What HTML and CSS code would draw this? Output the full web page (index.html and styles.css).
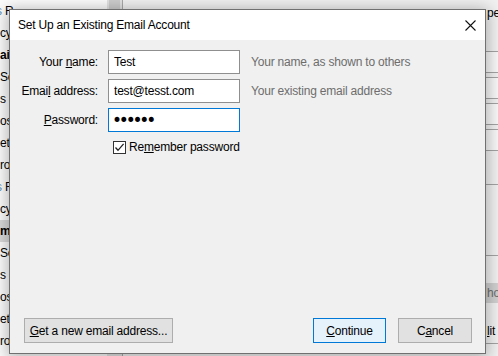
FILE: index.html
```html
<!DOCTYPE html>
<html lang="en">
<head>
  <meta charset="UTF-8">
  <meta name="viewport" content="width=device-width, initial-scale=1">
  <title>Set Up an Existing Email Account</title>
  <link rel="stylesheet" href="styles.css">
</head>
<body>

  <!-- account settings window behind the dialog -->
  <div class="app">
    <ul class="tree">
      <li class="cut"><span class="blue">s</span> R</li>
      <li>cy</li>
      <li class="bold">ail</li>
      <li>Se</li>
      <li>s &amp;</li>
      <li>os</li>
      <li>et</li>
      <li>ro</li>
      <li class="cut"><span class="blue">s</span> R</li>
      <li>cy</li>
      <li class="bold sel">m</li>
      <li>Se</li>
      <li>s &amp;</li>
      <li>os</li>
      <li>et</li>
      <li>ro</li>
    </ul>
    <div class="scrollbar"><div class="thumb"></div></div>
    <div class="pane">
      <div class="pane-main"></div>
      <div class="pane-edge">
        <div class="edge-label">pe</div>
        <div class="edge-box first"></div>
        <div class="edge-box"></div>
        <div class="edge-box"></div>
        <div class="edge-box"></div>
        <div class="edge-group"></div>
        <div class="edge-btn disabled">ho</div>
        <div class="edge-btn last"><u>l</u>it</div>
      </div>
    </div>
  </div>

  <!-- dialog -->
  <div class="dialog">
    <div class="titlebar">
      <span class="title">Set Up an Existing Email Account</span>
      <svg class="close" width="11" height="11" viewBox="0 0 11 11">
        <path d="M0.5 0.5 L10.5 10.5 M10.5 0.5 L0.5 10.5" stroke="#111" stroke-width="1.1" fill="none"/>
      </svg>
    </div>

    <form class="form">
      <label for="name">Your <u>n</u>ame:</label>
      <input class="field" id="name" type="text" value="Test">
      <span class="hint">Your name, as shown to others</span>

      <label for="email">Emai<u>l</u> address:</label>
      <input class="field" id="email" type="text" value="test@tesst.com">
      <span class="hint">Your existing email address</span>

      <label for="password"><u>P</u>assword:</label>
      <input class="field focus password" id="password" type="password" value="secret">
      <span></span>

      <label class="remember">
        <span class="check">
          <svg width="11" height="11" viewBox="0 0 11 11">
            <polyline points="1.5,5.5 4,8.3 9.6,1.8" stroke="#222" stroke-width="1.3" fill="none"/>
          </svg>
        </span>
        Re<u>m</u>ember password
      </label>
    </form>

    <div class="footer">
      <button class="btn new" type="button"><u>G</u>et a new email address...</button>
      <button class="btn continue" type="button"><u>C</u>ontinue</button>
      <button class="btn cancel" type="button">C<u>a</u>ncel</button>
    </div>
  </div>

</body>
</html>
```

FILE: styles.css
```css
/* page */
body {
  margin: 0;
  font-family: "Liberation Sans", Arial, sans-serif;
  font-size: 12px;
  letter-spacing: -0.2px;
  color: #000;
  background: #fff;
  overflow: hidden;
}

/* settings window behind */
.app {
  display: flex;
  height: 356px;
}
.tree {
  list-style: none;
  margin: 0;
  padding: 0;
  width: 107px;
  background: #fbfbfb;
}
.tree li {
  height: 22px;
  line-height: 22px;
  white-space: nowrap;
  overflow: hidden;
}
.tree .cut {
  text-indent: -4px;
}
.tree .blue {
  color: #5b8fb9;
}
.tree .bold {
  font-weight: bold;
}
.tree .sel {
  background: #d9d9d9;
}
.scrollbar {
  width: 15px;
  background: #e2e2e2;
  border-right: 1px solid #a8a8a8;
}
.scrollbar .thumb {
  margin: 0 2px;
  height: 140px;
  background: #cdcdcd;
}
.pane {
  flex: 1;
  display: flex;
  background: #f0f0f0;
}
.pane-main {
  flex: 1;
}
.pane-edge {
  width: 13px;
  overflow: hidden;
  white-space: nowrap;
  display: flex;
  flex-direction: column;
}
.edge-label {
  height: 20px;
  padding: 6px 0 0 2px;
  box-sizing: border-box;
  line-height: 14px;
}
.edge-box {
  height: 22px;
  margin-top: 4px;
  border-top: 1px solid #a3a3a3;
  border-bottom: 1px solid #a3a3a3;
  background: #f7f7f7;
  box-sizing: border-box;
  flex: none;
}
.edge-box.first {
  margin-top: 31px;
}
.edge-group {
  height: 72px;
  margin-top: 33px;
  border-top: 1px solid #a3a3a3;
  border-bottom: 1px solid #a3a3a3;
  box-sizing: border-box;
  flex: none;
}
.edge-btn {
  height: 20px;
  margin-top: 27px;
  padding-left: 2px;
  line-height: 20px;
  flex: none;
}
.edge-btn.disabled {
  background: #cfcfcf;
  color: #6d6d6d;
}
.edge-btn.last {
  height: 23px;
  margin-top: 18px;
  border-bottom: 1px solid #a3a3a3;
  box-sizing: border-box;
}

/* dialog */
.dialog {
  position: absolute;
  left: 9px;
  top: 9px;
  width: 477px;
  height: 345px;
  box-sizing: border-box;
  border: 1px solid #707070;
  background: #f0f0f0;
  box-shadow: 0 2px 14px 2px rgba(0, 0, 0, 0.28);
  display: flex;
  flex-direction: column;
}
.titlebar {
  height: 30px;
  flex: none;
  background: #fff;
  display: flex;
  align-items: center;
  padding: 0 9px 0 8px;
}
.title {
  flex: 1;
}

/* form */
.form {
  display: grid;
  grid-template-columns: 88px 132px 1fr;
  grid-template-rows: 24px 24px 24px 20px;
  column-gap: 10px;
  row-gap: 5px;
  padding-top: 10px;
  margin: 0;
  align-items: center;
}
.form label {
  text-align: right;
}
.field {
  width: 132px;
  height: 24px;
  box-sizing: border-box;
  margin: 0;
  padding: 0 5px;
  border: 1px solid #8f8f8f;
  background: #fff;
  font: inherit;
  letter-spacing: inherit;
  color: #000;
  outline: none;
}
.field.focus {
  border-color: #0078d7;
}
.field.password {
  font-family: "DejaVu Sans", sans-serif;
  font-size: 17px;
  letter-spacing: -3.2px;
  padding-left: 3px;
}
.hint {
  color: #6d6d6d;
  margin-left: 1px;
}
.form .remember {
  grid-column: 2 / 4;
  text-align: left;
  display: flex;
  align-items: center;
  padding-left: 5px;
}
.check {
  width: 13px;
  height: 13px;
  box-sizing: border-box;
  border: 1px solid #333;
  background: #fff;
  margin-right: 3px;
  display: flex;
}

/* buttons */
.footer {
  margin-top: auto;
  display: flex;
  gap: 12px;
  padding: 0 13px 10px 14px;
}
.btn {
  height: 25px;
  box-sizing: border-box;
  padding: 0;
  border: 1px solid #adadad;
  background: #e1e1e1;
  font: inherit;
  letter-spacing: inherit;
  color: #000;
}
.btn.new {
  width: 149px;
}
.btn.continue {
  width: 73px;
  margin-left: auto;
  background: #e5f1fb;
  border-color: #0078d7;
}
.btn.cancel {
  width: 74px;
}
```
